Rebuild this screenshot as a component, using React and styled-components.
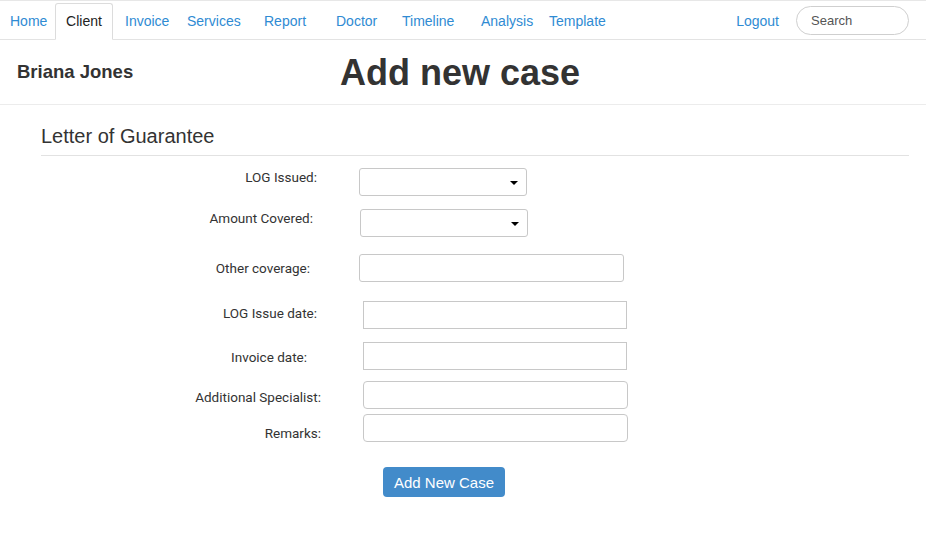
import React from 'react'
import styled, { createGlobalStyle } from 'styled-components';

const GlobalStyle = createGlobalStyle`
  body {
    margin: 0;
    background: #fff;
    font-family: "Liberation Sans", Arial, sans-serif;
    font-size: 14px;
    color: #333;
  }
  #root {
    width: 926px;
  }
`;

const navItems = [
  { name: 'Home', w: 45 },
  { name: 'Client', w: 70, active: true },
  { name: 'Invoice', w: 62 },
  { name: 'Services', w: 77 },
  { name: 'Report', w: 72 },
  { name: 'Doctor', w: 66 },
  { name: 'Timeline', w: 79 },
  { name: 'Analysis', w: 68 },
  { name: 'Template', w: 60 },
];

// top = gap above the field, lr = right edge of label text, ly = label nudge
const fields = [
  { label: 'LOG Issued:', select: true, top: 12, lr: 317, left: 359, w: 168, ly: -5 },
  { label: 'Amount Covered:', select: true, top: 13, lr: 313, left: 360, w: 168, ly: -5 },
  { label: 'Other coverage:', top: 17, lr: 310, left: 359, w: 265, ly: 0, r: 3 },
  { label: 'LOG Issue date:', top: 19, lr: 317, left: 363, w: 264, ly: -2, r: 0 },
  { label: 'Invoice date:', top: 13, lr: 307, left: 363, w: 264, ly: 1, r: 0 },
  { label: 'Additional Specialist:', top: 11, lr: 321, left: 363, w: 265, ly: 2, r: 4 },
  { label: 'Remarks:', top: 5, lr: 321, left: 363, w: 265, ly: 5, r: 4 },
];

const App = () => {
  return (
    <>
      <GlobalStyle />
      <Navbar>
        <NavList>
          {navItems.map((item) =>
            item.active ? (
              <ActiveTab key={item.name}>{item.name}</ActiveTab>
            ) : (
              <NavLink key={item.name} $w={item.w}>{item.name}</NavLink>
            )
          )}
        </NavList>
        <NavRight>
          <Logout>Logout</Logout>
          <SearchBox placeholder="Search" />
        </NavRight>
      </Navbar>

      <Header>
        <ClientName>Briana Jones</ClientName>
        <Title>Add new case</Title>
        <span />
      </Header>

      <Section>
        <SectionTitle>Letter of Guarantee</SectionTitle>
        <Form>
          {fields.map((f) => (
            <Row key={f.label} $top={f.top}>
              <Label $right={f.lr} $dy={f.ly}>{f.label}</Label>
              <FieldSlot $gap={f.left - f.lr}>
                {f.select ? (
                  <SelectBox $w={f.w}>
                    <Caret />
                  </SelectBox>
                ) : (
                  <TextInput $w={f.w} $r={f.r} />
                )}
              </FieldSlot>
            </Row>
          ))}
          <ButtonRow>
            <SubmitButton>Add New Case</SubmitButton>
          </ButtonRow>
        </Form>
      </Section>
    </>
  )
}

export default App;


const Navbar = styled.nav`
  display: flex;
  align-items: stretch;
  justify-content: space-between;
  height: 38px;
  border-top: 1px solid #e7e7e7;
  border-bottom: 1px solid #e3e3e3;
  padding-right: 17px;
`;

const NavList = styled.div`
  display: flex;
  align-items: flex-end;
  padding-left: 10px;
`;

const NavLink = styled.a`
  display: flex;
  align-items: center;
  height: 37px;
  width: ${(p) => p.$w}px;
  color: #2f8bd3;
  font-size: 14px;
  text-decoration: none;
  box-sizing: border-box;
`;

const ActiveTab = styled.a`
  display: flex;
  align-items: center;
  justify-content: center;
  box-sizing: border-box;
  width: 58px;
  height: 37px;
  margin-right: 12px;
  margin-bottom: -1px;
  padding-bottom: 1px;
  color: #222;
  font-size: 14px;
  background: #fff;
  border: 1px solid #dcdcdc;
  border-bottom: 1px solid #fff;
  border-radius: 3px 3px 0 0;
`;

const NavRight = styled.div`
  display: flex;
  align-items: center;
  gap: 17px;
`;

const Logout = styled.a`
  color: #2f8bd3;
  font-size: 14px;
  padding-top: 2px;
`;

const SearchBox = styled.input`
  box-sizing: border-box;
  width: 113px;
  height: 29px;
  border: 1px solid #cfcfcf;
  border-radius: 15px;
  padding: 0 14px;
  font-family: "Liberation Sans", Arial, sans-serif;
  font-size: 13px;
  outline: none;
  &::placeholder {
    color: #555;
  }
`;

const Header = styled.header`
  display: grid;
  grid-template-columns: 1fr auto 1fr;
  align-items: center;
  height: 64px;
  border-bottom: 1px solid #ececec;
`;

const ClientName = styled.h2`
  margin: 0 0 0 17px;
  font-size: 18.5px;
  font-weight: bold;
  color: #333;
  padding-bottom: 1px;
`;

const Title = styled.h1`
  margin: 0;
  font-size: 36px;
  font-weight: bold;
  color: #333;
  padding-right: 6px;
  padding-top: 1px;
`;

const Section = styled.section`
  padding: 0 17px 0 41px;
`;

const SectionTitle = styled.h3`
  margin: 0;
  padding: 20px 0 7px;
  font-size: 20px;
  font-weight: normal;
  color: #333;
  border-bottom: 1px solid #e2e2e2;
`;

const Form = styled.form`
  margin-left: -41px;
`;

const Row = styled.div`
  display: flex;
  align-items: center;
  margin-top: ${(p) => p.$top}px;
`;

const Label = styled.label`
  width: ${(p) => p.$right}px;
  text-align: right;
  font-family: Roboto, "Liberation Sans", sans-serif;
  font-size: 13.5px;
  color: #333;
  position: relative;
  top: ${(p) => p.$dy}px;
`;

const FieldSlot = styled.div`
  margin-left: ${(p) => p.$gap}px;
`;

const SelectBox = styled.div`
  position: relative;
  box-sizing: border-box;
  width: ${(p) => p.$w}px;
  height: 28px;
  border: 1px solid #c8c8c8;
  border-radius: 3px;
  background: #fff;
`;

const Caret = styled.span`
  position: absolute;
  right: 8px;
  top: 12px;
  width: 0;
  height: 0;
  border-left: 4px solid transparent;
  border-right: 4px solid transparent;
  border-top: 4px solid #000;
`;

const TextInput = styled.input`
  display: block;
  box-sizing: border-box;
  width: ${(p) => p.$w}px;
  height: 28px;
  border: 1px solid #c8c8c8;
  border-radius: ${(p) => p.$r}px;
  outline: none;
`;

const ButtonRow = styled.div`
  display: flex;
  margin-top: 25px;
  padding-left: 383px;
`;

const SubmitButton = styled.button`
  box-sizing: border-box;
  width: 122px;
  height: 30px;
  padding: 0;
  border: none;
  border-radius: 4px;
  background-color: #428bca;
  color: #fff;
  font-family: "Liberation Sans", Arial, sans-serif;
  font-size: 15px;
  cursor: pointer;
`;
